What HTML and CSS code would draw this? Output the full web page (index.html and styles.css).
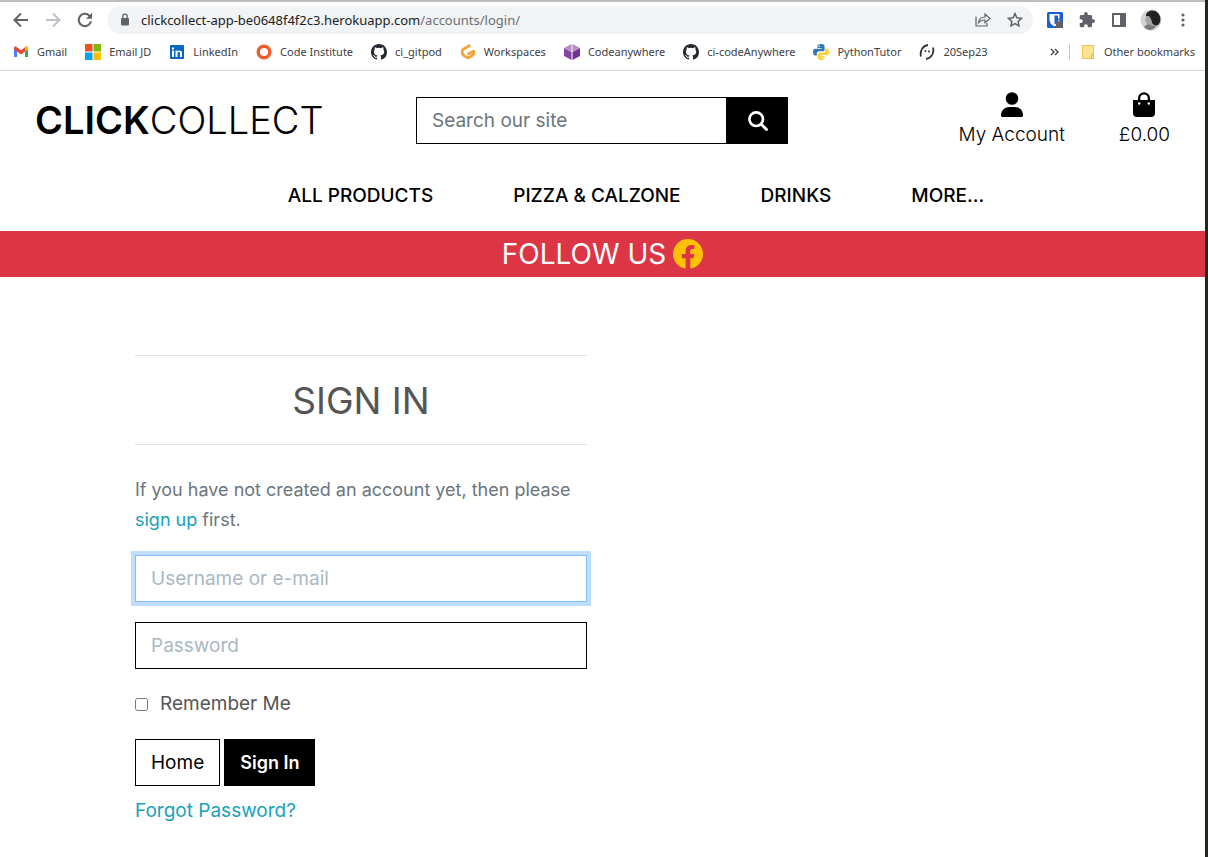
FILE: index.html
```html
<!DOCTYPE html>
<html lang="en">
<head>
<meta charset="utf-8">
<title>Click Collect - Sign In</title>
<link rel="stylesheet" href="styles.css">
</head>
<body>
<svg class="defs" aria-hidden="true">
  <symbol id="github" viewBox="0 0 16 16"><path fill="#24292f" d="M8 0C3.58 0 0 3.58 0 8c0 3.54 2.29 6.53 5.47 7.59.4.07.55-.17.55-.38v-1.49c-2.01.37-2.53-.49-2.69-.94-.09-.23-.48-.94-.82-1.13-.28-.15-.68-.52-.01-.53.63-.01 1.08.58 1.23.82.72 1.21 1.87.87 2.33.66.07-.52.28-.87.51-1.07-1.78-.2-3.64-.89-3.64-3.95 0-.87.31-1.59.82-2.15-.08-.2-.36-1.02.08-2.12 0 0 .67-.21 2.2.82a7.6 7.6 0 0 1 4 0c1.53-1.04 2.2-.82 2.2-.82.44 1.1.16 1.92.08 2.12.51.56.82 1.27.82 2.15 0 3.07-1.87 3.75-3.65 3.95.29.25.54.73.54 1.48v2.2c0 .21.15.46.55.38A8 8 0 0 0 16 8c0-4.42-3.58-8-8-8z"/></symbol>
</svg>
<div class="window">
  <header class="browser">
    <div class="tabstrip"></div>
    <div class="toolbar">
      <button class="tool" aria-label="Back"><svg width="16" height="16" viewBox="0 0 16 16"><path d="M15 8H2M8 1.500 1.500 8 8 14.500" fill="none" stroke="#5f6368" stroke-width="2"/></svg></button>
      <button class="tool" aria-label="Forward"><svg width="16" height="16" viewBox="0 0 16 16"><path d="M1 8h13M8 1.500 14.500 8 8 14.500" fill="none" stroke="#bdc1c6" stroke-width="2"/></svg></button>
      <button class="tool" aria-label="Reload"><svg width="16" height="16" viewBox="0 0 16 16"><path d="M14 9.200A6.200 6.200 0 1 1 12.500 3.800L14 5.300" fill="none" stroke="#5f6368" stroke-width="2"/><path d="M15 .8v6H9z" fill="#5f6368"/></svg></button>
      <div class="address">
        <svg width="10" height="14" viewBox="0 0 10 14"><rect x="1" y="5" width="8" height="7.500" rx="1" fill="#5f6368"/><path d="M2.800 5.500V3.400a2.200 2.200 0 0 1 4.400 0v2.100" fill="none" stroke="#5f6368" stroke-width="1.300"/></svg>
        <span class="url">clickcollect-app-be0648f4f2c3.herokuapp.com<span class="path">/accounts/login/</span></span>
        <button class="tool" aria-label="Share"><svg width="16" height="16" viewBox="0 0 16 16"><path d="M1 4.500V14h11v-3M3.500 10.500C4 7 6 5 10 5V2l5 4.500-5 4.200V8C7 8 5 8.700 3.500 10.500z" fill="none" stroke="#5f6368" stroke-width="1.200"/></svg></button>
        <button class="tool" aria-label="Bookmark"><svg width="16" height="16" viewBox="0 0 16 16"><path d="m8 1.600 1.900 4.200 4.600.5-3.400 3.100.9 4.500-4-2.300-4 2.300.9-4.500-3.400-3.100 4.600-.5z" fill="none" stroke="#5f6368" stroke-width="1.500"/></svg></button>
      </div>
      <div class="extensions">
        <button class="tool" aria-label="Bitwarden"><svg width="16" height="16" viewBox="0 0 16 16"><rect width="16" height="16" rx="1.500" fill="#175ddc"/><path d="M2.500 2h10v6c0 3-2 5-5 6.500-3-1.500-5-3.500-5-6.500z" fill="#fff"/><path d="M7.500 3.500h3.500V8c0 2-1.500 3.500-3.500 4.500z" fill="#175ddc"/><path d="M9 9.500h7V16H9z" fill="#5f6368"/><path d="M10.700 10V9a1.800 1.800 0 0 1 3.600 0v1" fill="none" stroke="#5f6368" stroke-width="1.300"/></svg></button>
        <button class="tool" aria-label="Extensions"><svg width="16" height="16" viewBox="1 1 22 22"><path d="M20.500 11H19V7c0-1.100-.9-2-2-2h-4V3.500a2.500 2.500 0 0 0-5 0V5H4c-1.100 0-2 .9-2 2v3.800h1.500a2.700 2.700 0 0 1 0 5.400H2V20c0 1.100.9 2 2 2h3.800v-1.500a2.700 2.700 0 0 1 5.400 0V22H17c1.100 0 2-.9 2-2v-4h1.500a2.500 2.500 0 0 0 0-5z" fill="#5f6368"/></svg></button>
        <button class="tool" aria-label="Side panel"><svg width="16" height="16" viewBox="0 0 16 16"><path d="M1 1h14v14H1zM3 3v10h6V3z" fill="#5f6368" fill-rule="evenodd"/></svg></button>
        <button class="tool" aria-label="Profile"><svg width="22" height="22" viewBox="0 0 22 22"><circle cx="11" cy="11" r="10.500" fill="#d2d2d2"/><path d="M6 6C7 1 15 0 18 4c3 3 3 9 1 11-2 2-5 2-7 0l-1-4-3-3-2 1z" fill="#222"/><path d="m6 7 3 0 2 3 1 4 2 2-3 2-4-2-1-3-1-1z" fill="#a5a5a5"/><path d="M4 18c3-3 5-3 8-1l4-1c-1 5-7 7-12 2z" fill="#777"/></svg></button>
        <button class="tool" aria-label="Menu"><svg width="16" height="16" viewBox="0 0 16 16" fill="#5f6368"><circle cx="8" cy="3" r="1.600"/><circle cx="8" cy="8" r="1.600"/><circle cx="8" cy="13" r="1.600"/></svg></button>
      </div>
    </div>
    <nav class="bookmarks" aria-label="Bookmarks">
      <a href="#"><svg width="16" height="16" viewBox="0 0 16 16"><path d="M1 13V4l3 2v7z" fill="#4285f4"/><path d="M12 6l3-2v9h-3z" fill="#34a853"/><path d="M1 5V4c0-1.500 1.600-1.900 2.600-1.100L8 6.300l4.400-3.400C13.400 2.100 15 2.500 15 4v1.300L8 10.500 1 5.300z" fill="#ea4335"/><path d="M12 3.200c1-1.200 3-.7 3 .8v1.400l-3 2.200z" fill="#fbbc04"/></svg>Gmail</a>
      <a href="#"><svg width="16" height="16" viewBox="0 0 16 16"><path d="M0 0h7.500v7.500H0z" fill="#f25022"/><path d="M8.500 0H16v7.500H8.500z" fill="#7fba00"/><path d="M0 8.500h7.500V16H0z" fill="#00a4ef"/><path d="M8.500 8.500H16V16H8.500z" fill="#ffb900"/></svg>Email JD</a>
      <a href="#"><svg width="16" height="16" viewBox="0 0 16 16"><rect x="1" y="1" width="14" height="14" rx="1" fill="#0a66c2"/><path d="M3 6.500h2V13H3zM3 3.500h2v2H3zM6.500 6.500h2v1c1-1.700 4.500-1.500 4.500 1.500v4h-2V9.500c0-2-2.500-2-2.500 0V13h-2z" fill="#fff"/></svg>LinkedIn</a>
      <a href="#"><svg width="16" height="16" viewBox="0 0 16 16"><circle cx="8" cy="8" r="5.800" fill="none" stroke="#f15a29" stroke-width="3.400"/></svg>Code Institute</a>
      <a href="#"><svg width="16" height="16"><use href="#github"/></svg>ci_gitpod</a>
      <a href="#"><svg width="16" height="16" viewBox="0 0 16 16"><path d="M9.300 1.800 3.300 5.200Q2.300 5.800 2.300 7v2.600q0 1 1 1.600l3.700 2.200q1 .5 2 0l3.700-2.200q1-.6 1-1.600V7.200L8.600 9.800" fill="none" stroke="#f6a13c" stroke-width="2.800" stroke-linecap="round" stroke-linejoin="round"/></svg>Workspaces</a>
      <a href="#"><svg width="16" height="16" viewBox="0 0 16 16"><path d="m0 4 7.500 4v8L0 12z" fill="#8743a1"/><path d="m16 4-7.500 4v8l7.500-4z" fill="#6f3490"/><path d="m0 4 7.500-4v8zM16 4 8.500 0v8z" fill="#b98bc9"/></svg>Codeanywhere</a>
      <a href="#"><svg width="16" height="16"><use href="#github"/></svg>ci-codeAnywhere</a>
      <a href="#"><svg width="16" height="16" viewBox="0 0 16 16"><path d="M8 0C5 0 4.500 1 4.500 2.200V4h4v.7H2.300C.8 4.700 0 6 0 8c0 2.200.9 3.500 2.300 3.500h1.500V9.600c0-1.400 1-2.300 2.300-2.300h3.600c1.200 0 1.900-.8 1.900-1.900V2.200C11.600.8 10.300 0 8 0z" fill="#3776ab"/><path d="M8 16c3 0 3.500-1 3.500-2.200V12h-4v-.7h6.200c1.500 0 2.300-1.300 2.300-3.300 0-2.200-.9-3.500-2.300-3.500h-1.500v1.900c0 1.400-1 2.300-2.300 2.300H6.300c-1.200 0-1.900.8-1.900 1.900v3.200C4.400 15.200 5.700 16 8 16z" fill="#fbd23e"/><circle cx="6.200" cy="2.200" r=".8" fill="#fff"/><circle cx="9.800" cy="13.800" r=".8" fill="#fff"/></svg>PythonTutor</a>
      <a href="#"><svg width="16" height="16" viewBox="0 0 16 16"><path d="M9 1C4 1.500.500 7 2 12.500M7 15c5-.5 8.500-6 7-11.500" fill="none" stroke="#333" stroke-width="1.800"/><circle cx="6.500" cy="7" r="1" fill="#333"/><circle cx="10" cy="7.500" r="1" fill="#333"/></svg>20Sep23</a>
      <div class="overflow">
        <button class="tool more" aria-label="More bookmarks"><svg width="9" height="8" viewBox="0 0 9 8"><path d="m1 1 3 3-3 3m4-6 3 3-3 3" fill="none" stroke="#444" stroke-width="1.400"/></svg></button>
        <span class="divider"></span>
        <a href="#"><svg width="16" height="16" viewBox="0 0 16 16"><path d="M2.500 1.500h11v13h-11z" fill="#fde293" stroke="#ebc84b"/><path d="M11.500 10.500h2v4h-2z" fill="#fbe9a5" stroke="#e5bb35"/></svg>Other bookmarks</a>
      </div>
    </nav>
  </header>

  <header class="site-header">
    <a class="logo" href="#"><strong>CLICK</strong>COLLECT</a>
    <form class="search">
      <input type="text" aria-label="Search our site" placeholder="Search our site">
      <button type="button" aria-label="Search"><svg width="20" height="20" viewBox="0 0 20 20"><circle cx="8.200" cy="8.200" r="6.800" fill="none" stroke="#fff" stroke-width="2.700"/><path d="m13 13 5.500 5.500" stroke="#fff" stroke-width="2.900" stroke-linecap="round"/></svg></button>
    </form>
    <div class="account">
      <a href="#"><svg width="22" height="26" viewBox="0 0 22 26"><circle cx="11" cy="6.500" r="6.300"/><path d="M0 23.500C0 18 4 15 8.500 15h5c4.500 0 8.500 3 8.500 8.500 0 .8-.6 1.500-1.500 1.500h-19C.6 25 0 24.300 0 23.500z"/></svg>My Account</a>
      <a href="#"><svg width="22" height="26" viewBox="0 0 22 26"><path d="M0 8h5V6.200a6 6 0 0 1 12 0V8h5v13a4 4 0 0 1-4 4H4a4 4 0 0 1-4-4zm7.300 0h7.400V6.200a3.700 3.700 0 0 0-7.400 0z"/><circle cx="6.200" cy="11.500" r="1.200" fill="#fff"/><circle cx="15.800" cy="11.500" r="1.200" fill="#fff"/></svg>£0.00</a>
    </div>
  </header>
  <nav class="site-nav" aria-label="Main">
    <a href="#">ALL PRODUCTS</a><a href="#">PIZZA &amp; CALZONE</a><a href="#">DRINKS</a><a href="#">MORE...</a>
  </nav>
  <div class="banner">FOLLOW US <a href="#" aria-label="Facebook"><svg width="30" height="30" viewBox="0 0 30 30"><circle cx="15" cy="15" r="15" fill="#ffc107"/><path d="M12.600 30V19.200H8.900V15h3.700v-2.900c0-4 2.300-6.200 5.700-6.200 1.200 0 2.500.2 3.100.4v3.600h-1.700c-1.800 0-2.400 1-2.400 2.200V15h4l-.7 4.200h-3.300V30z" fill="#dc3545"/></svg></a></div>

  <main class="content">
    <h1>SIGN IN</h1>
    <p class="lead">If you have not created an account yet, then please <a href="#">sign up</a> first.</p>
    <form class="login">
      <input class="field focused" type="text" aria-label="Username or e-mail" placeholder="Username or e-mail">
      <input class="field" type="password" aria-label="Password" placeholder="Password">
      <div class="remember"><input type="checkbox" id="remember"><label for="remember">Remember Me</label></div>
      <div class="actions"><a class="btn" href="#">Home</a><button class="btn primary" type="button">Sign In</button></div>
      <a class="forgot" href="#">Forgot Password?</a>
    </form>
  </main>
</div>
</body>
</html>
```
FILE: styles.css
```css
* { box-sizing: border-box; }
body {
  margin: 0;
  background: #fff;
  font-family: Inter, "Liberation Sans", sans-serif;
  font-size: 19px;
  line-height: 30px;
  color: #555;
}
a { color: #17a2b8; text-decoration: none; }
button, input { font: inherit; border-radius: 0; }
svg { display: block; flex: none; }
.defs { position: absolute; width: 0; height: 0; }
.window { min-height: 100vh; border-right: 3px solid #20291a; }

.browser {
  font-family: "Noto Sans", sans-serif;
  border-bottom: 1px solid #d4d6d9;
}
.tabstrip { height: 2px; background: #bdbdbd; }
.toolbar { display: flex; align-items: center; gap: 16px; height: 36px; padding: 0 14px 0 13px; }
.tool { display: flex; padding: 0; border: 0; background: none; }
.address {
  flex: 1;
  display: flex;
  align-items: center;
  gap: 16px;
  height: 28px;
  margin: 0 -2px;
  padding: 0 10px 0 13px;
  border-radius: 14px;
  background: #f1f3f4;
}
.url { flex: 1; margin-left: -5px; font-size: 13px; color: #202124; white-space: nowrap; }
.path { color: #6b6f73; }
.extensions { display: flex; align-items: center; gap: 16px; }
.extensions .tool { width: 16px; justify-content: center; }
.bookmarks {
  display: flex;
  align-items: center;
  gap: 18px;
  height: 32px;
  padding: 0 10px 4px 13px;
  font-size: 11px;
}
.bookmarks a { display: flex; align-items: center; gap: 8px; color: #3c4043; white-space: nowrap; }
.overflow { display: flex; align-items: center; gap: 10px; margin-left: auto; }
.divider { width: 1px; height: 16px; background: #c4c7ca; }

.site-header {
  display: grid;
  grid-template-columns: 381px 372px 1fr;
  align-items: center;
  padding: 18px 35px 0;
}
.logo { font-size: 38px; line-height: 48px; font-weight: 300; color: #000; }
.logo strong { font-weight: 600; }
.search { display: flex; height: 47px; margin-top: 2px; }
.search input { flex: 1; min-width: 0; padding: 0 15px; border: 1px solid #000; color: #495057; }
.search input::placeholder { color: #6c757d; }
.search button { width: 61px; display: flex; align-items: center; justify-content: center; border: 0; background: #000; }
.account { display: flex; justify-content: flex-end; gap: 54px; }
.account a { display: flex; flex-direction: column; align-items: center; gap: 2px; padding-top: 3px; font-weight: 300; color: #000; }
.site-nav { display: flex; justify-content: center; gap: 80px; padding: 31px 0 20px 67px; }
.site-nav a { color: #000; font-weight: 500; -webkit-text-stroke: 0; }
.banner {
  display: flex;
  align-items: center;
  justify-content: center;
  gap: 7px;
  height: 46px;
  background: #dc3545;
  color: #fff;
  font-size: 28px;
}

.content { width: 452px; max-width: 100%; margin: 78px 0 0 135px; }
h1 {
  margin: 0 0 30px;
  padding: 20px 0 19px;
  border: solid #e3e3e3;
  border-width: 1px 0;
  font-size: 37px;
  line-height: 49px;
  font-weight: 400;
  text-align: center;
}
.lead { margin: 0 0 20px; font-size: 18px; color: #6c757d; }
.field { display: block; width: 100%; height: 47px; margin-bottom: 20px; padding: 0 15px; border: 1px solid #000; background: #fff; }
.field::placeholder { color: #aab7c4; }
.focused { border-color: #80bdff; box-shadow: 0 0 0 4px #bfdeff; }
.remember { display: flex; align-items: center; gap: 12px; margin-bottom: 20px; }
.remember input { width: 13px; height: 13px; margin: 0; }
.actions { display: flex; gap: 4px; margin-bottom: 10px; }
.btn { display: flex; align-items: center; height: 47px; padding: 0 15px; border: 1px solid #000; background: #fff; color: #000; }
.primary { background: #000; color: #fff; font-size: 18px; font-weight: 600; }
```
